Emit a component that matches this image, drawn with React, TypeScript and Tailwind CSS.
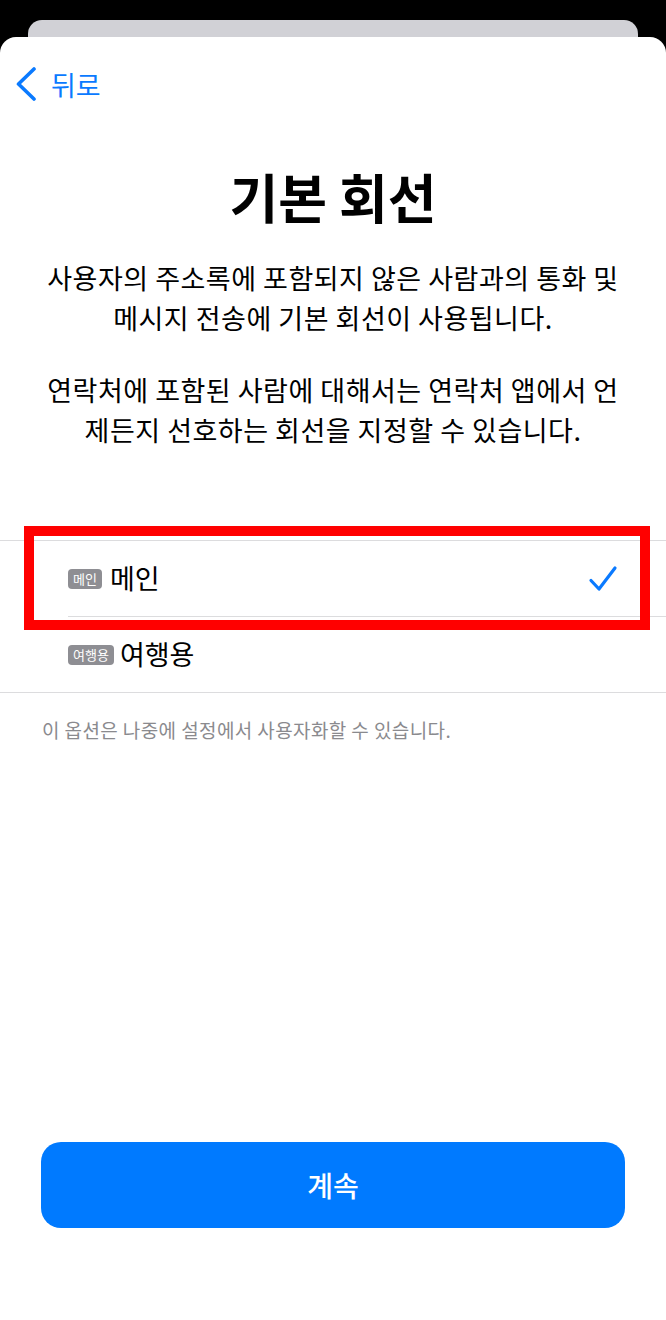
const font = "font-['Noto_Sans_CJK_KR','Noto_Sans',sans-serif]";

function LineBadge(props: { label: string }) {
  return (
    <span className="inline-flex items-center h-[20px] px-[5px] rounded-[4px] bg-[#8e8e93] text-white text-[13px] leading-none">
      {props.label}
    </span>
  );
}

export default function App() {
  return (
    <div className={`w-[666px] h-[1320px] bg-black flex flex-col overflow-hidden ${font}`}>
      {/* stacked sheet behind */}
      <div className="mt-[20px] mx-[28px] h-[17px] rounded-t-[14px] bg-[#d1d1d6]" />

      <div className="flex-1 bg-white rounded-t-[16px] flex flex-col">
        {/* back */}
        <div className="mt-[25px] h-[44px] flex items-center pl-[15px] text-[#0a7aff]">
          <svg width="22" height="34" viewBox="0 0 22 34" fill="none">
            <path d="M19 2 L3.5 17 L19 32" stroke="currentColor" strokeWidth="3.6" strokeLinecap="round" strokeLinejoin="round" />
          </svg>
          <span className="ml-[14px] text-[27px] leading-none">뒤로</span>
        </div>

        <h1 className="mt-[60px] text-center text-[53px] leading-[60px] font-bold text-black">기본 회선</h1>

        <div className="mt-[32px] px-[20px] text-center text-[27px] leading-[40px] tracking-[0.5px] text-black">
          <p>
            사용자의 주소록에 포함되지 않은 사람과의 통화 및<br />
            메시지 전송에 기본 회선이 사용됩니다.
          </p>
          <p className="mt-[32px]">
            연락처에 포함된 사람에 대해서는 연락처 앱에서 언<br />
            제든지 선호하는 회선을 지정할 수 있습니다.
          </p>
        </div>

        {/* line picker */}
        <div className="relative mt-[90px] border-t border-b border-[#dcdcde]">
          <div className="h-[76px] ml-[68px] pr-[48px] flex items-center border-b border-[#dcdcde]">
            <LineBadge label="메인" />
            <span className="ml-[8px] text-[27px] text-black">메인</span>
            <svg className="ml-auto" width="30" height="28" viewBox="0 0 30 28" fill="none">
              <path d="M3 15.5 L11 24 L27 3" stroke="#0a7aff" strokeWidth="3.2" strokeLinecap="round" strokeLinejoin="round" />
            </svg>
          </div>
          <div className="h-[75px] ml-[68px] flex items-center">
            <LineBadge label="여행용" />
            <span className="ml-[6px] text-[27px] text-black">여행용</span>
          </div>

          {/* highlight frame */}
          <div className="absolute left-[24px] top-[-15px] w-[626px] h-[104px] border-[10px] border-[#ff0000]" />
        </div>

        <p className="mt-[24px] pl-[42px] text-[19px] leading-[26px] tracking-[0.4px] text-[#8a8a8e]">
          이 옵션은 나중에 설정에서 사용자화할 수 있습니다.
        </p>

        <button className="mt-[399px] mx-[41px] w-[584px] h-[86px] rounded-[20px] bg-[#007aff] text-white text-[28px] font-medium">
          계속
        </button>
      </div>
    </div>
  );
}
